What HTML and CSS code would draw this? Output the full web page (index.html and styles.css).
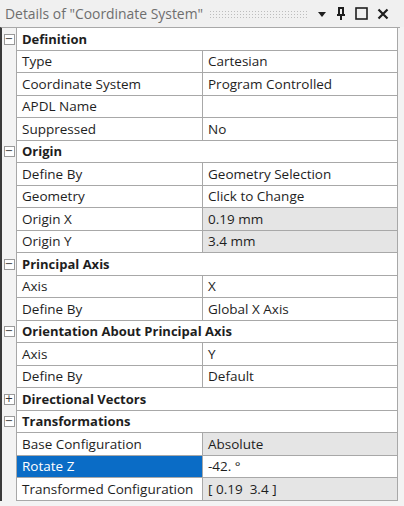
FILE: index.html
```html
<!DOCTYPE html>
<html lang="en">
<head>
  <meta charset="UTF-8" />
  <title>Details of "Coordinate System"</title>
  <link rel="stylesheet" href="styles.css">
</head>
<body>
  <div class="panel">
    <div class="titlebar">
      <span class="title">Details of "Coordinate System"</span>
      <span class="grip"></span>
      <span class="tools">
        <svg width="10" height="8" viewBox="0 0 10 8"><path d="M1 2h8L5 7z" fill="#1e1e1e"/></svg>
        <svg width="10" height="14" viewBox="0 0 10 14"><path d="M2 1h6M3 1v7M7 1v7M1 8h8M5 8v5" stroke="#1e1e1e" stroke-width="2" fill="none"/></svg>
        <svg width="13" height="13" viewBox="0 0 13 13"><rect x="1" y="1" width="11" height="11" stroke="#1e1e1e" stroke-width="1.6" fill="none"/></svg>
        <svg width="12" height="12" viewBox="0 0 12 12"><path d="M1.5 1.5l9 9M10.5 1.5l-9 9" stroke="#1e1e1e" stroke-width="2.2"/></svg>
      </span>
    </div>

    <div class="sheet">
      <div class="row head"><span class="gutter"><i class="box">−</i></span><span class="cat">Definition</span></div>
      <div class="row"><span class="gutter"></span><span class="name">Type</span><span class="value">Cartesian</span></div>
      <div class="row"><span class="gutter"></span><span class="name">Coordinate System</span><span class="value">Program Controlled</span></div>
      <div class="row"><span class="gutter"></span><span class="name">APDL Name</span><span class="value"></span></div>
      <div class="row"><span class="gutter"></span><span class="name">Suppressed</span><span class="value">No</span></div>

      <div class="row head"><span class="gutter"><i class="box">−</i></span><span class="cat">Origin</span></div>
      <div class="row"><span class="gutter"></span><span class="name">Define By</span><span class="value">Geometry Selection</span></div>
      <div class="row"><span class="gutter"></span><span class="name">Geometry</span><span class="value">Click to Change</span></div>
      <div class="row"><span class="gutter"></span><span class="name">Origin X</span><span class="value shaded">0.19 mm</span></div>
      <div class="row"><span class="gutter"></span><span class="name">Origin Y</span><span class="value shaded">3.4 mm</span></div>

      <div class="row head"><span class="gutter"><i class="box">−</i></span><span class="cat">Principal Axis</span></div>
      <div class="row"><span class="gutter"></span><span class="name">Axis</span><span class="value">X</span></div>
      <div class="row"><span class="gutter"></span><span class="name">Define By</span><span class="value">Global X Axis</span></div>

      <div class="row head"><span class="gutter"><i class="box">−</i></span><span class="cat">Orientation About Principal Axis</span></div>
      <div class="row"><span class="gutter"></span><span class="name">Axis</span><span class="value">Y</span></div>
      <div class="row"><span class="gutter"></span><span class="name">Define By</span><span class="value">Default</span></div>

      <div class="row head"><span class="gutter"><i class="box">+</i></span><span class="cat">Directional Vectors</span></div>

      <div class="row head"><span class="gutter"><i class="box">−</i></span><span class="cat">Transformations</span></div>
      <div class="row"><span class="gutter"></span><span class="name">Base Configuration</span><span class="value shaded">Absolute</span></div>
      <div class="row"><span class="gutter"></span><span class="name selected">Rotate Z</span><span class="value">-42. °</span></div>
      <div class="row"><span class="gutter"></span><span class="name">Transformed Configuration</span><span class="value shaded">[ 0.19  3.4 ]</span></div>
    </div>
  </div>
</body>
</html>
```

FILE: styles.css
```css
body { margin: 0; background: #f3f3f3; font-family: "Open Sans", "Noto Sans", sans-serif; font-size: 13.5px; color: #1e1e1e; }
.panel { width: 404px; height: 506px; overflow: hidden; }

.titlebar { height: 27px; display: flex; align-items: center; padding-left: 5px; box-sizing: border-box; background: #f0f0f0; }
.title { font-size: 13.9px; color: #6e6e6e; white-space: nowrap; }
.grip { width: 100px; height: 8px; margin-left: 6px; background-image: radial-gradient(circle, #bdbdbd 0.8px, transparent 1px); background-size: 3px 3px; }
.tools { display: flex; align-items: center; gap: 9px; margin-left: 8px; }

.sheet { border-left: 2px solid #3a3a3a; border-top: 1px solid #a8a8a8; width: 398px; }
.row { display: flex; height: 22.5px; }
.gutter { width: 14px; flex: none; display: flex; align-items: center; justify-content: center; background: #f3f3f3; }
.box { font-style: normal; width: 9px; height: 9px; border: 1px solid #9a9a9a; background: #fff; font-size: 10px; line-height: 8px; text-align: center; color: #333; font-family: "DejaVu Sans", sans-serif; }
.name, .value, .cat { box-sizing: border-box; border-bottom: 1px solid #a8a8a8; display: flex; align-items: center; padding-left: 5px; white-space: pre; background: #fff; }
.name { width: 186px; border-left: 1px solid #a8a8a8; }
.value { width: 196px; border-left: 1px solid #a8a8a8; border-right: 1px solid #a8a8a8; }
.cat { width: 382px; border-left: 1px solid #a8a8a8; border-right: 1px solid #a8a8a8; font-weight: bold; font-size: 13px; }
.shaded { background: #e5e5e5; }
.selected { background: #0a6cc6; color: #fff; }
```
